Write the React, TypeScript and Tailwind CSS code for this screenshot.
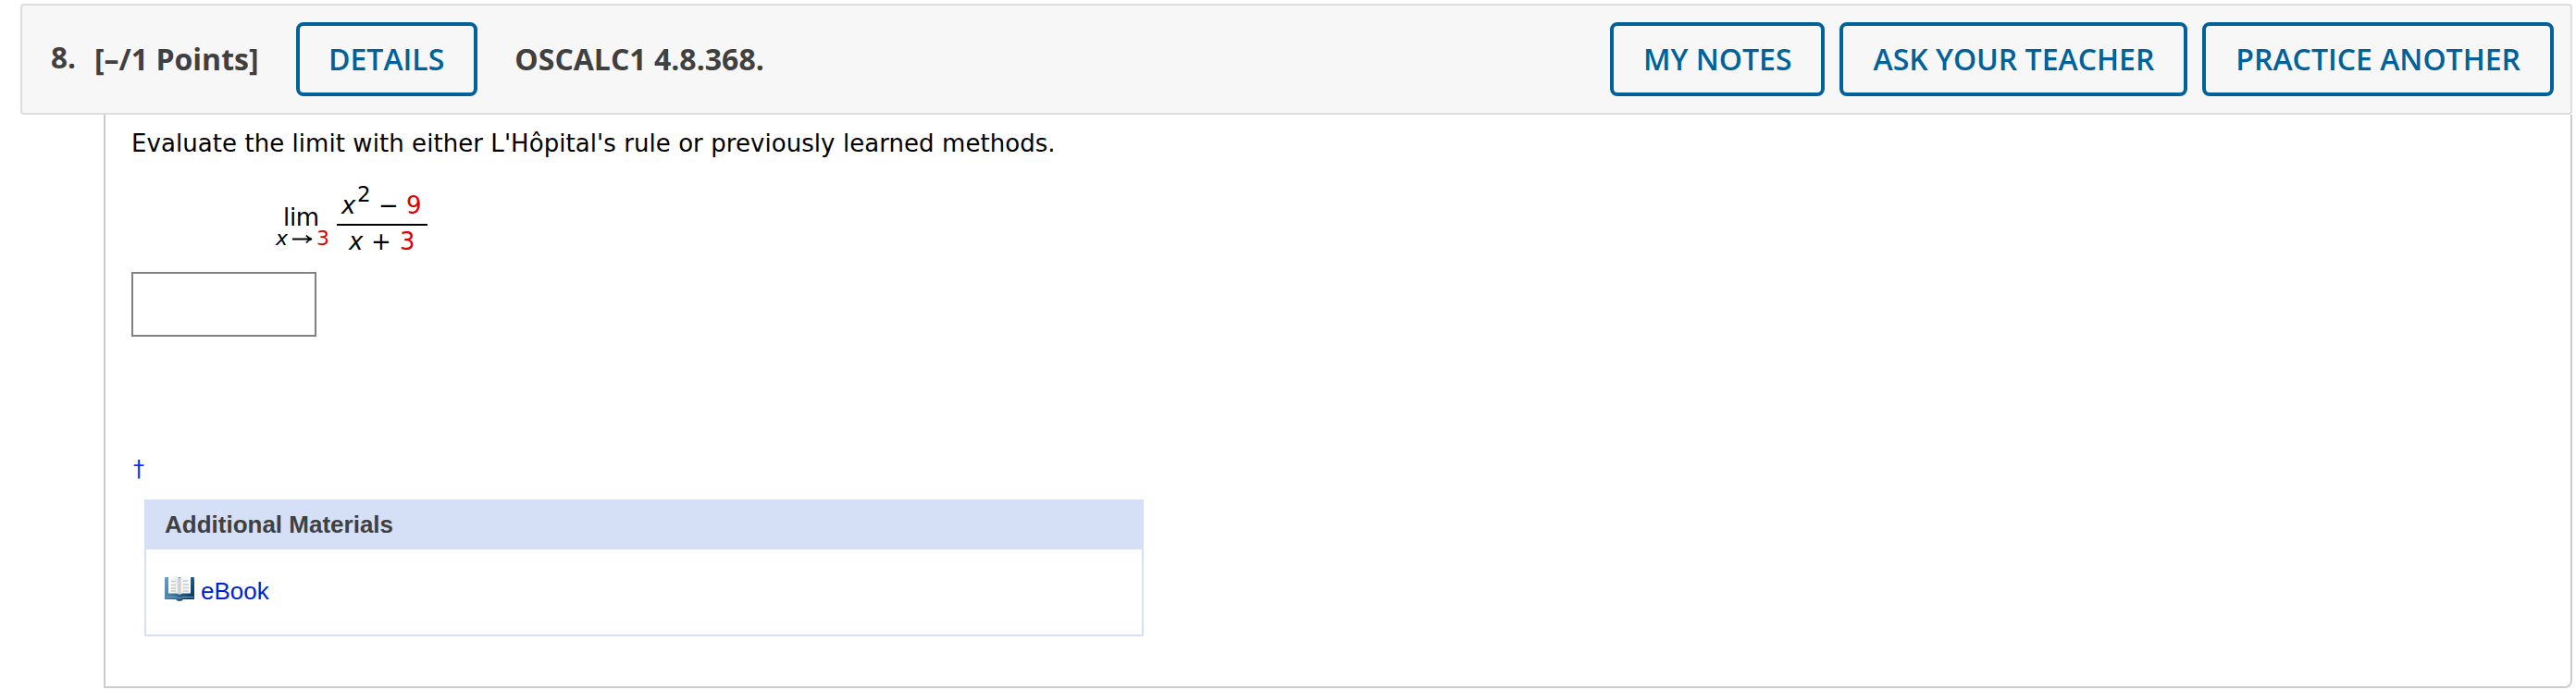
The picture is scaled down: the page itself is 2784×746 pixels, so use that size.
import type { ReactNode } from "react";

function HeaderButton({ children, padding = "px-8" }: { children: ReactNode; padding?: string }) {
  return (
    <button
      className={`h-20 shrink-0 rounded-lg border-4 border-[#006298] text-[32px] leading-[44px] font-semibold whitespace-nowrap text-[#006298] ${padding}`}
    >
      {children}
    </button>
  );
}

function BookIcon() {
  return (
    <svg width="32" height="30" viewBox="0 0 32 30" className="shrink-0">
      <defs>
        <linearGradient id="cover" x1="0" y1="0" x2="1" y2="0.5">
          <stop offset="0" stopColor="#69a3c6" />
          <stop offset="0.5" stopColor="#3f7ba3" />
          <stop offset="1" stopColor="#0d3f6b" />
        </linearGradient>
        <linearGradient id="page" x1="0" y1="0" x2="1" y2="0">
          <stop offset="0" stopColor="#ffffff" />
          <stop offset="0.38" stopColor="#efefef" />
          <stop offset="0.5" stopColor="#c4c4c4" />
          <stop offset="0.6" stopColor="#f4f4f4" />
          <stop offset="1" stopColor="#ffffff" />
        </linearGradient>
      </defs>
      <path d="M0 4 Q0 3 1 3 H31 Q32 3 32 4 V27 H20 Q19 29 16 29 Q13 29 12 27 H0 Z" fill="url(#cover)" />
      <path d="M1 24.5 H12 Q16 27 20 24.5 H31" fill="none" stroke="#6f9fbf" strokeWidth="1" />
      <path d="M4 3 Q4 1.500 6 1.500 H12 Q15 2 16 4.500 Q17 2 20 1.500 H26 Q28 1.500 28 3 V20.500 H19 L16 22 L13 20.500 H4 Z" fill="url(#page)" />
      <path d="M7 7.5 H12 M6.5 11.500 H12 M6.500 15 H12 M6.500 18 H12 M20 7 H25.500 M20 11 H26 M20 14.500 H26 M20 18 H26" stroke="#c9c9c9" strokeWidth="1.4" />
    </svg>
  );
}

function Limit() {
  return (
    <div className="ml-[155px] flex h-[78px] items-start text-[26px] leading-[30px]">
      <div className="flex w-[60px] flex-col pt-[18px]">
        <span className="pl-[9px] tracking-[-0.3px]">lim</span>
        <div className="-mt-[6px] flex text-[22px] leading-[28px]">
          <span className="w-[16px] pl-px italic">x</span>
          <svg width="25" height="28" viewBox="0 0 25 28" fill="none" stroke="#000" strokeWidth="1.8">
            <path d="M3 14.5 H24 M18 10.500 Q20 13.500 24 14.500 Q20 15.500 18 18.500" />
          </svg>
          <span className="pl-[4px] text-[#e00000]">3</span>
        </div>
      </div>
      <div className="ml-[7px] flex w-[98px] flex-col">
        <div className="flex h-[42px] border-b-2 border-black pt-[5px]">
          <span className="w-[22px] pl-[5px] italic">x</span>
          <span className="-mt-[12px] w-[23px] text-[23px]">2</span>
          <span className="w-[30px]">−</span>
          <span className="text-[#e00000]">9</span>
        </div>
        <div className="mt-[2px] flex">
          <span className="w-[37px] pl-[13px] italic">x</span>
          <span className="w-[31px]">+</span>
          <span className="text-[#e00000]">3</span>
        </div>
      </div>
    </div>
  );
}

export default function App() {
  return (
    <div className="h-[746px] w-[2784px] bg-white pt-1 pl-[22px] font-['Open_Sans',sans-serif]">
      <header className="flex h-[120px] w-[2758px] items-center rounded-t rounded-b-sm border-2 border-[#dddddd] bg-[#f7f7f7] pr-[18px] pl-[31px] text-[32px] leading-[44px] font-bold text-[#404040]">
        <span className="w-[47px] pb-1 text-[31.5px]">8.</span>
        <span className="w-[218px] whitespace-nowrap">[–/1 Points]</span>
        <HeaderButton padding="pl-[31px] pr-8">DETAILS</HeaderButton>
        <span className="ml-10 whitespace-nowrap">OSCALC1 4.8.368.</span>
        <div className="ml-auto flex gap-4">
          <HeaderButton>MY NOTES</HeaderButton>
          <HeaderButton>ASK YOUR TEACHER</HeaderButton>
          <HeaderButton>PRACTICE ANOTHER</HeaderButton>
        </div>
      </header>
      <main className="ml-[90px] h-[620px] w-[2668px] rounded-br-lg border-2 border-t-0 border-[#cccccc] pl-7 font-['DejaVu_Sans',sans-serif] text-[26px] leading-[30px] text-black">
        <p className="pt-4 tracking-[0.06px] whitespace-nowrap">
          Evaluate the limit with either L'Hôpital's rule or previously learned methods.
        </p>
        <div className="mt-8">
          <Limit />
        </div>
        <input aria-label="Answer" className="mt-[14px] block h-[70px] w-[200px] border-2 border-[#808080] bg-white" />
        <a className="mt-32 block h-[30px] pl-[2px] text-[24px] text-[#0033ff]">†</a>
        <section className="mt-[18px] ml-[14px] h-[148px] w-[1080px] border-2 border-[#d5dff6] font-['Liberation_Sans',sans-serif]">
          <h2 className="h-[52px] bg-[#d5dff6] pt-[10px] pl-5 font-bold text-[#404040]">Additional Materials</h2>
          <a className="flex items-start gap-[7px] pt-[27px] pl-5 text-[#0022cc]">
            <BookIcon />
            <span className="pt-[3px]">eBook</span>
          </a>
        </section>
      </main>
    </div>
  );
}
